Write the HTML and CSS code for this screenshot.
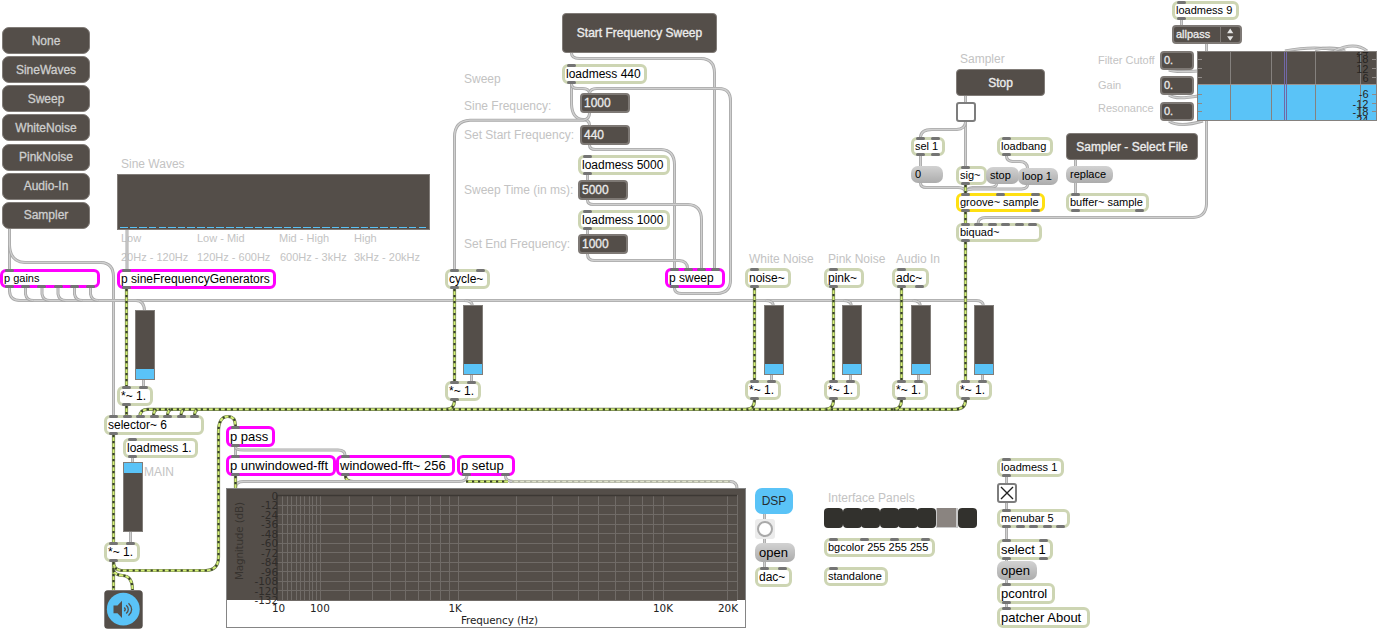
FILE: index.html
```html
<!DOCTYPE html>
<html lang="en">
<head>
<meta charset="utf-8">
<title>Patcher</title>
<link rel="stylesheet" href="styles.css">
</head>
<body>
<main class="patcher" id="patcher">
  <div class="comments" id="comments"></div>
  <svg class="cords" id="cords" width="1378" height="633" viewBox="0 0 1378 633"></svg>
  <nav class="tabs">
    <button class="tab">None</button>
    <button class="tab">SineWaves</button>
    <button class="tab">Sweep</button>
    <button class="tab">WhiteNoise</button>
    <button class="tab">PinkNoise</button>
    <button class="tab">Audio-In</button>
    <button class="tab">Sampler</button>
  </nav>
  <div class="multislider"><div class="multislider-values"></div></div>
  <div class="objects" id="objects"></div>
  <div class="bang"><span class="bang-ring"></span></div>
  <div class="swatches">
    <i class="swatch"></i><i class="swatch"></i><i class="swatch"></i><i class="swatch"></i><i class="swatch"></i><i class="swatch"></i><i class="swatch swatch-on"></i><i class="swatch"></i>
  </div>
  <div class="umenu"><span class="umenu-text">allpass</span>
    <svg class="umenu-arrows" width="20" height="16" viewBox="0 0 20 16"><path d="M9.500 1.300l3.200 5H6.300zM9.500 14l3.200-4.600H6.300z" fill="#e4e4e4"/></svg>
  </div>
  <svg class="speaker" width="39" height="39" viewBox="0 0 39 39">
    <rect x=".3" y=".3" width="38.400" height="38.400" rx="3.500" fill="#544e49"/>
    <circle cx="19.300" cy="19.200" r="16.400" fill="#5ac3f7"/>
    <path d="M9.500 15.500h4l4.500-4.700v17.200l-4.500-4.700h-4z" fill="#544e49"/>
    <path d="M20.300 17.500q1.900 1.900 0 3.800M22.200 15.300q4.200 4.100 0 8.200M24.500 13.200q6.300 6.200 0 12.400" fill="none" stroke="#544e49" stroke-width="1.300"/>
  </svg>
  <svg class="filtergraph" id="filtergraph" width="180" height="70" viewBox="0 0 180 70"></svg>
  <svg class="spectroscope" id="spectroscope" width="520" height="140" viewBox="0 0 520 140"></svg>
</main>
<script src="patch.js"></script>
</body>
</html>
```

FILE: styles.css
```css
body {
  margin: 0;
  background: #fff;
  font-family: "Liberation Sans", Arial, sans-serif;
}

.patcher {
  position: relative;
  width: 1378px;
  height: 633px;
  overflow: hidden;
}

.cords {
  position: absolute;
  left: 0;
  top: 0;
}

.cord { fill: none; stroke: #a8a8a8; stroke-width: 3; }
.cord-core { fill: none; stroke: #d0d0d0; stroke-width: 1.3; }
.signal { fill: none; stroke: #6d7c4c; stroke-width: 3.2; }
.signal-core { fill: none; stroke: #d5f078; stroke-width: 1.8; }
.signal-dash { fill: none; stroke: #38402c; stroke-width: 2.2; stroke-dasharray: 2.2 3.8; }
.signal-faint .signal { stroke: #9a9f90; }
.signal-faint .signal-core { stroke: #dfe2cd; }
.signal-faint .signal-dash { stroke: #b3b6a8; }

.comment {
  position: absolute;
  color: #c3c3c3;
  line-height: 16px;
  white-space: nowrap;
}

.f11 { font-size: 11px; }
.f12 { font-size: 12px; }
.f13 { font-size: 13px; }

.object {
  position: absolute;
  box-sizing: border-box;
  display: flex;
  align-items: center;
  white-space: nowrap;
  color: #000;
}

.object.f11 { padding-bottom: 2px; }

.box {
  border: 3px solid #cdd5b3;
  border-radius: 6px;
  background: #fff;
  padding-left: 1px;
}
.sub { border-color: #f0f; }
.buffer { border-color: #ffe012; }

.message {
  border-radius: 7px;
  padding-left: 4px;
  background: linear-gradient(#d2d2d2, #acacac);
}

.number {
  border: 2px solid #7e7975;
  border-radius: 4px;
  padding-left: 2px;
  background: #544e49;
  color: #ececec;
  -webkit-text-stroke: .3px #ececec;
}

.textbutton {
  justify-content: center;
  border: 1px solid #817c78;
  border-radius: 4px;
  background: #544e49;
  color: #ececec;
  -webkit-text-stroke: .35px #ececec;
}

.dsp {
  justify-content: center;
  border-radius: 7px;
  background: #5ac3f7;
  color: #252c30;
}

.toggle {
  border: 2px solid #7d7d7d;
  border-radius: 3px;
  background: #fff;
}
.toggle-mark { width: 16px; height: 16px; }

.port {
  position: absolute;
  width: 9px;
  height: 3px;
  border-radius: 1.5px;
  background: #747474;
}
.inlet { top: -3px; }
.outlet { bottom: -3px; }

.slider {
  border: 1px solid #817d79;
  background: #544e49;
  flex-direction: column;
  align-items: stretch;
  justify-content: flex-end;
}
.slider-fill { height: 10px; background: #5ac3f7; }
.slider-full { justify-content: flex-start; }

.tabs {
  position: absolute;
  left: 2px;
  top: 27px;
  width: 88px;
  height: 202px;
  display: flex;
  flex-direction: column;
  justify-content: space-between;
}
.tab {
  height: 27px;
  padding: 0;
  border: 1px solid #817c78;
  border-radius: 7px;
  background: #544e49;
  color: #cecece;
  font: 12px "Liberation Sans", Arial, sans-serif;
  -webkit-text-stroke: .3px #cecece;
}

.multislider {
  position: absolute;
  left: 117px;
  top: 174px;
  width: 313px;
  height: 56px;
  box-sizing: border-box;
  display: flex;
  align-items: flex-end;
  padding: 1px 2px;
  border: 1px solid #817c78;
  background: #544e49;
}
.multislider-values {
  flex: 1;
  height: 1px;
  background: repeating-linear-gradient(90deg, #5ac3f7 0 7.600px, #544e49 7.600px 9.630px);
}

.bang {
  position: absolute;
  left: 755px;
  top: 519px;
  width: 20px;
  height: 20px;
  display: flex;
  align-items: center;
  justify-content: center;
  border-radius: 3px;
  background: #ececec;
}
.bang-ring {
  width: 12px;
  height: 12px;
  border: 2px solid #a9a9a9;
  border-radius: 50%;
  background: #fff;
}

.swatches {
  position: absolute;
  left: 824px;
  top: 508px;
  width: 153px;
  height: 20px;
  display: flex;
}
.swatch { flex: 1; margin-right: -.6px; border-radius: 4px; background: #32312d; }
.swatch:last-child { margin-right: 0; }
.swatch-on {
  box-sizing: border-box;
  margin-right: 0;
  border: 1px solid #c9c9c9;
  border-width: 0 2px 1px 1px;
  border-radius: 0;
  background: #8a8480;
}

.umenu {
  position: absolute;
  left: 1172px;
  top: 25px;
  width: 70px;
  height: 19px;
  box-sizing: border-box;
  display: flex;
  align-items: center;
  border: 2px solid #7e7975;
  border-radius: 4px;
  background: #544e49;
  color: #ececec;
  font-size: 11px;
}
.umenu-text { width: 45px; padding: 0 0 2px 2px; -webkit-text-stroke: .3px #ececec; }
.umenu-arrows { border-left: 1px solid #7e7975; }

.speaker { position: absolute; left: 104px; top: 590px; }
.filtergraph { position: absolute; left: 1197px; top: 51px; }
.spectroscope { position: absolute; left: 226px; top: 488px; }

.filter-label { font: 11px "Liberation Sans", Arial, sans-serif; text-anchor: end; fill: #272522; }
.axis-label { font: 10.400px "DejaVu Sans", sans-serif; text-anchor: end; fill: #2f2c29; }
.axis-title { font: 10.400px "DejaVu Sans", sans-serif; fill: #222; }
.axis-title-y { font: 10.400px "DejaVu Sans", sans-serif; fill: #37332f; }
```

FILE: patch.js
```js
const SVG = "http://www.w3.org/2000/svg";

function svg(parent, tag, attrs, text) {
  const el = document.createElementNS(SVG, tag);
  for (const k in attrs) el.setAttribute(k, attrs[k]);
  if (text !== undefined) el.textContent = text;
  parent.appendChild(el);
  return el;
}

// [kind, x, y, width, height, text, font size, inlets, outlets]
const objects = [
  ["box sub", 0, 269, 100, 19, "p gains", 11, 1, 6],
  ["box sub", 117, 269, 159, 20, "p sineFrequencyGenerators", 12, 1, 1],
  ["slider", 135, 310, 20, 70],
  ["box", 117, 386, 36, 20, "*~ 1.", 12, 2, 1],
  ["box", 104, 415, 100, 20, "selector~ 6", 12, 7, 1],
  ["box", 123, 438, 75, 20, "loadmess 1.", 12, 1, 1],
  ["slider slider-full", 123, 462, 20, 70],
  ["box", 104, 542, 36, 20, "*~ 1.", 12, 2, 1],
  ["textbutton", 562, 13, 155, 40, "Start Frequency Sweep", 12],
  ["box", 562, 64, 85, 20, "loadmess 440", 12, 1, 1],
  ["number", 580, 93, 50, 20, "1000", 12],
  ["number", 580, 125, 50, 20, "440", 12],
  ["box", 578, 155, 92, 20, "loadmess 5000", 12, 1, 1],
  ["number", 578, 180, 50, 20, "5000", 12],
  ["box", 578, 210, 92, 20, "loadmess 1000", 12, 1, 1],
  ["number", 578, 234, 50, 20, "1000", 12],
  ["box", 445, 269, 45, 20, "cycle~", 12, 2, 1],
  ["box sub", 665, 268, 60, 20, "p sweep", 12, 4, 1],
  ["slider", 463, 305, 20, 70],
  ["box", 445, 381, 36, 20, "*~ 1.", 12, 2, 1],
  ["box", 745, 268, 46, 20, "noise~", 12, 1, 1],
  ["box", 824, 268, 40, 20, "pink~", 12, 1, 1],
  ["box", 892, 268, 37, 20, "adc~", 12, 1, 2],
  ["slider", 764, 305, 20, 70],
  ["slider", 842, 305, 20, 70],
  ["slider", 911, 305, 20, 70],
  ["slider", 974, 305, 20, 70],
  ["box", 745, 380, 36, 20, "*~ 1.", 12, 2, 1],
  ["box", 824, 380, 36, 20, "*~ 1.", 12, 2, 1],
  ["box", 892, 380, 36, 20, "*~ 1.", 12, 2, 1],
  ["box", 956, 380, 36, 20, "*~ 1.", 12, 2, 1],
  ["textbutton", 956, 69, 89, 27, "Stop", 12],
  ["toggle", 956, 102, 20, 20],
  ["box", 911, 137, 34, 19, "sel 1", 11, 2, 2],
  ["message", 911, 166, 32, 17, "0", 11],
  ["box", 956, 166, 31, 19, "sig~", 11, 1, 1],
  ["message", 986, 167, 33, 17, "stop", 11],
  ["message", 1018, 168, 40, 17, "loop 1", 11],
  ["box", 997, 137, 56, 19, "loadbang", 11, 1, 1],
  ["box buffer", 956, 193, 89, 19, "groove~ sample", 11, 3, 2],
  ["box", 956, 223, 86, 19, "biquad~", 11, 6, 1],
  ["textbutton", 1066, 133, 132, 27, "Sampler - Select File", 12],
  ["message", 1066, 166, 47, 17, "replace", 11],
  ["box", 1066, 193, 83, 19, "buffer~ sample", 11, 1, 2],
  ["box", 1172, 1, 67, 19, "loadmess 9", 11, 1, 1],
  ["number", 1160, 51, 34, 19, "0.", 11],
  ["number", 1160, 76, 34, 19, "0.", 11],
  ["number", 1160, 102, 34, 19, "0.", 11],
  ["box sub", 226, 426, 49, 21, "p pass", 13, 1, 1],
  ["box sub", 226, 455, 110, 21, "p unwindowed-fft", 13, 1, 1],
  ["box sub", 336, 455, 119, 21, "windowed-fft~ 256", 13, 2, 1],
  ["box sub", 457, 455, 58, 21, "p setup", 13, 0, 2],
  ["dsp", 755, 488, 38, 26, "DSP", 12],
  ["message", 755, 543, 40, 19, "open", 13],
  ["box", 755, 567, 37, 20, "dac~", 12, 2, 0],
  ["box", 824, 538, 111, 19, "bgcolor 255 255 255", 11, 4, 0],
  ["box", 824, 567, 64, 19, "standalone", 11, 1, 0],
  ["box", 997, 458, 67, 19, "loadmess 1", 11, 1, 1],
  ["toggle", 997, 483, 20, 20, "x"],
  ["box", 997, 509, 73, 19, "menubar 5", 11, 1, 5],
  ["box", 997, 539, 56, 21, "select 1", 13, 2, 2],
  ["message", 997, 561, 40, 19, "open", 13],
  ["box", 997, 583, 58, 21, "pcontrol", 13, 1, 1],
  ["box", 997, 607, 93, 21, "patcher About", 13, 1, 0]
];

const layer = document.getElementById("objects");

function addPorts(el, side, count, width) {
  for (let i = 0; i < count; i++) {
    const port = document.createElement("i");
    port.className = "port " + side;
    const step = count > 1 ? (width - 19) / (count - 1) : 0;
    port.style.left = 5 - 3 + i * step + "px";
    el.appendChild(port);
  }
}

for (const [kind, x, y, w, h, text, size, ins, outs] of objects) {
  const el = document.createElement("div");
  el.className = "object " + kind + (size ? " f" + size : "");
  el.style.left = x + "px";
  el.style.top = y + "px";
  el.style.width = w + "px";
  el.style.height = h + "px";
  if (kind.startsWith("slider")) {
    const fill = document.createElement("div");
    fill.className = "slider-fill";
    el.appendChild(fill);
  } else if (kind === "toggle") {
    if (text) {
      const mark = svg(el, "svg", { class: "toggle-mark", viewBox: "0 0 16 16" });
      svg(mark, "path", { d: "M2 2L14 14M14 2L2 14", stroke: "#222", "stroke-width": 1.4 });
    }
  } else {
    const label = document.createElement("span");
    label.textContent = text;
    el.appendChild(label);
  }
  addPorts(el, "inlet", ins || 0, w);
  addPorts(el, "outlet", outs || 0, w);
  layer.appendChild(el);
}

// [x, vertical centre, text, font size]
const comments = [
  [121, 163.5, "Sine Waves", 12],
  [121, 238, "Low", 11], [197, 238, "Low - Mid", 11], [279, 238, "Mid - High", 11], [354, 238, "High", 11],
  [121, 257, "20Hz - 120Hz", 11], [197, 257, "120Hz - 600Hz", 11], [280, 257, "600Hz - 3kHz", 11], [354, 257, "3kHz - 20kHz", 11],
  [464, 78.5, "Sweep", 12], [464, 105.5, "Sine Frequency:", 12], [464, 134.5, "Set Start Frequency:", 12],
  [464, 189.5, "Sweep Time (in ms):", 12], [464, 243.5, "Set End Frequency:", 12],
  [749, 258.5, "White Noise", 12], [828, 258.5, "Pink Noise", 12], [896, 258.5, "Audio In", 12],
  [960, 58.5, "Sampler", 12],
  [1098, 60, "Filter Cutoff", 11], [1098, 85, "Gain", 11], [1098, 108, "Resonance", 11],
  [144, 471.5, "MAIN", 12], [828, 497.5, "Interface Panels", 12]
];
for (const [x, y, text, size] of comments) {
  const el = document.createElement("span");
  el.className = "comment f" + size;
  el.style.left = x + "px";
  el.style.top = Math.round(y - 8) + "px";
  el.textContent = text;
  document.getElementById("comments").appendChild(el);
}

const cords = document.getElementById("cords");
const control = [
  "M9.500 229V269", "M9.500 245Q10 262 25 262.500H101Q113.500 263 113.500 277V415",
  "M127 230V269",
  "M571.500 53q0 5.500 8 5.500H701Q714.500 59 714.500 73V268",
  "M571.500 84V104Q572 119 583 119.500Q589.500 120 589.500 125",
  "M571.500 84q0 4.500 6 4.500h5q7 0 7 5",
  "M674.500 288q0 5.500 7 5.500H717Q730.500 293 730.500 280V101Q730.500 88.500 719 88.500H597q-7 0-7.500 5",
  "M589.500 113q0 6-6 7.200H470Q454.500 121 454.500 137V269",
  "M589.500 145q0 4.500 6 4.500H661Q674.500 150 674.500 165V268",
  "M587.500 175V180", "M587.500 200q0 4.500 6 4.500H688Q701.500 205 701.500 220V268",
  "M587.500 230V234", "M587.500 254q0 6.500 7 6.500H679q8.500 .5 8.500 8",
  "M132.500 458V462", "M130.500 532V542",
  "M965.500 96V102", "M965.500 122V166", "M965.500 122q0 7-9 7.500H932q-11 0-11.500 7.500",
  "M920.500 156V166", "M920.500 183q0 4.500 6 4.500H958q7 0 7.500 5",
  "M996.500 184q0 3-6 3.500H973q-7 1-7.500 5", "M1027.500 185q0 3.500-6 4H973q-7 0-7.500 3",
  "M1006.500 156q0 5 6 5.500h7q8 0 8 7",
  "M1075.500 160V166", "M1075.500 183V193",
  "M1181.500 20V25", "M1206.500 44V51", "M1206.500 121V204Q1206 217 1193 217.500H986q-8 0-8 6",
  "M1169 70q4 2.500 29 1", "M1169 95q6 5 29 1", "M1169 121q10 7 34 0",
  "M1285 51Q1308 46.500 1326 48.500T1344 51", "M1315 49.500Q1335 46 1345 51", "M1334 51Q1355 41 1367 51",
  "M235.500 447V455", "M235.500 447q0 3 8 3H338q7 0 7 5",
  "M235.500 488q0-6.500 8-6.500H459q8 0 8-6", "M505.500 476q0 5.500 8 5.500H730q7 0 7 7",
  "M764.500 514V519", "M764.500 539V543", "M764.500 562V567",
  "M1006.500 477V483", "M1006.500 503V509", "M1006.500 528V539", "M1006.500 559V562", "M1006.500 580V583", "M1006.500 604V607",
  "M9.500 288V291Q10 300.500 20 300.500H976q7.500 0 7.500 6"
];
for (const x of [25.5, 42, 58, 74.5, 90.5]) control.push(`M${x} 288v6q1 6.500 8 6.500`);
control.push("M136 300.500q8 0 8.500 10");
for (const x of [472.5, 773.5, 851.5, 920.5]) control.push(`M${x - 8} 300.500q8 0 8 6`);
control.push("M143.500 380V386");
for (const x of [471.5, 771.5, 850.5, 918.5, 982.5]) control.push(`M${x} 375V381`);

const signals = [
  "M126.500 289V386", "M126.500 406V416", "M454.500 289V381", "M754.500 288V380", "M833.500 288V380",
  "M901.500 288V380", "M965.500 242V380", "M965.500 185V193", "M965.500 212V223",
  "M965.500 400q0 9-10 9.300H148q-8 0-8 7",
  "M113.500 435V542", "M113.500 562V590",
  "M113.500 562q0 8 8 8.500H206Q218.500 570 218.500 557V432Q218.500 416.500 228 416.500Q235.500 416.500 235.500 426",
  "M113.500 570q1 5 9 5.500q10 .5 10 14.500",
  "M235.500 476V488"
];
for (const x of [153.5, 167.5, 181, 194.5]) signals.push(`M${x} 416q0-5 3-6.500`);
for (const x of [454.5, 754.5, 833.5, 901.5]) signals.push(`M${x} 400q0 9-8 9.300`);

function drawSignal(parent, d) {
  svg(parent, "path", { class: "signal", d });
  svg(parent, "path", { class: "signal-core", d });
  svg(parent, "path", { class: "signal-dash", d });
}
drawSignal(cords, "M345.500 476q0 5.500 8 5.500");
control.forEach(d => {
  svg(cords, "path", { class: "cord", d });
  svg(cords, "path", { class: "cord-core", d });
});
signals.forEach(d => drawSignal(cords, d));
drawSignal(cords, "M466 481.500H508");
drawSignal(svg(cords, "g", { class: "signal-faint" }), "M512 481.500H730");

// Filter response graph
const fg = document.getElementById("filtergraph");
svg(fg, "rect", { width: 180, height: 70, fill: "#544e49" });
svg(fg, "rect", { y: 34, width: 180, height: 36, fill: "#5ac3f7" });
for (const x of [33.5, 74.5, 118.5, 163.5]) svg(fg, "path", { d: `M${x} 0V70`, stroke: "#85817e" });
[["24", 4], ["18", 12], ["12", 21.5], ["6", 30.5], ["-6", 47], ["-12", 56.5], ["-18", 64.5], ["-24", 73]].forEach(([t, y]) =>
  svg(fg, "text", { class: "filter-label", x: 171.5, y }, t));
svg(fg, "path", { d: "M0 33.500H180", stroke: "#999390" });
svg(fg, "path", { d: "M87.500 0V70M89.500 0V70", stroke: "#7167a5" });
for (const y of [8.5, 17.5, 26.5, 43.5, 52.5, 60.5]) svg(fg, "path", { d: `M0 ${y}h5M175 ${y}h5`, stroke: "#8f8a87" });
svg(fg, "rect", { x: .5, y: .5, width: 179, height: 69, fill: "none", stroke: "#85817e" });

// Spectrum display
const sp = document.getElementById("spectroscope");
svg(sp, "rect", { x: .5, y: .5, width: 519, height: 139, fill: "#fff", stroke: "#858585" });
svg(sp, "rect", { x: 1, y: 1, width: 518, height: 111, fill: "#544e49" });
for (let i = 1; i < 12; i++) svg(sp, "path", { d: `M51 ${Math.round(7 + i * 9.5) + .5}H511`, stroke: "#706b67" });
for (const x of [56, 61, 65, 70, 74, 78, 83, 86, 90, 94, 123, 146, 164, 179, 192, 204, 214, 223, 232, 290, 326, 352, 372, 389, 403, 416, 427, 437, 501, 511])
  svg(sp, "path", { d: `M${x + .5} 7V112`, stroke: "#706b67" });
svg(sp, "path", { d: "M51 7.500H511M51 7V112", stroke: "#3c3834", fill: "none", "stroke-width": 1.5 });
for (let i = 0; i < 12; i++) svg(sp, "text", { class: "axis-label", x: 52, y: 11.5 + i * 9.5 }, i ? -12 * i : 0);
[[46, "10"], [84, "100"], [222.500, "1K"], [427, "10K"], [492, "20K"]].forEach(([x, t]) =>
  svg(sp, "text", { class: "axis-title", x, y: 123.500 }, t));
svg(sp, "text", { class: "axis-title", x: 235, y: 136, textLength: 77 }, "Frequency (Hz)");
svg(sp, "text", { class: "axis-title-y", transform: "translate(16.500 92) rotate(-90)", textLength: 78 }, "Magnitude (dB)");
```
